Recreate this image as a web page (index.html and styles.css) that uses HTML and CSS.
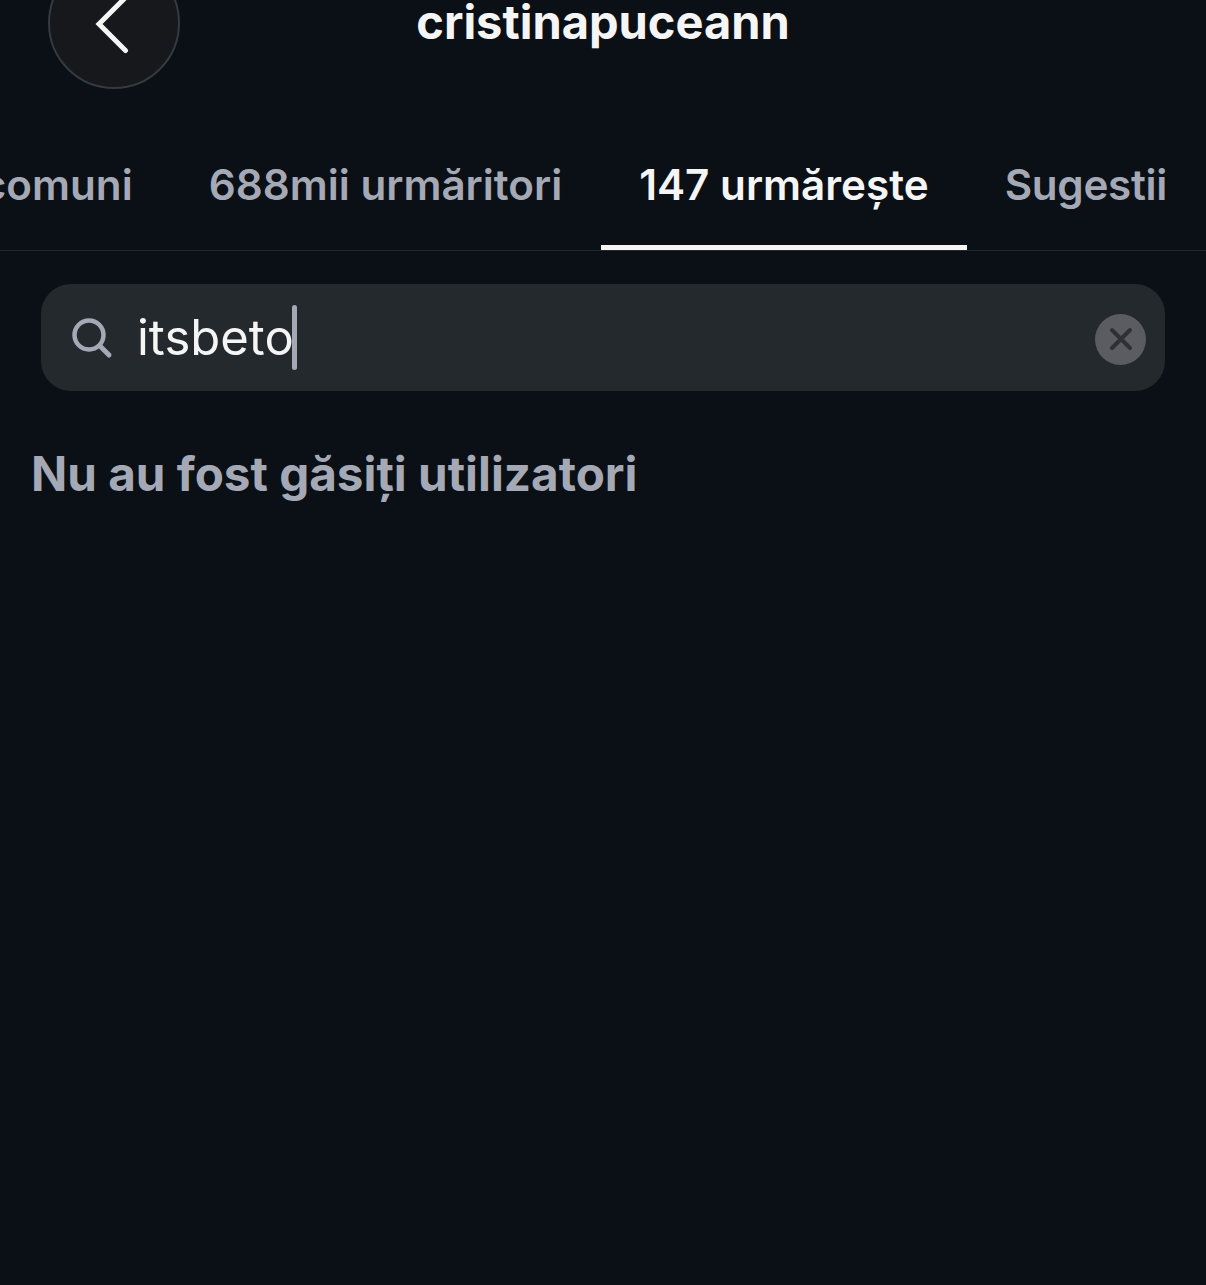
FILE: index.html
```html
<!DOCTYPE html>
<html lang="ro">
<head>
<meta charset="utf-8">
<title>cristinapuceann</title>
<link rel="stylesheet" href="styles.css">
</head>
<body>
<div class="page">
  <header class="header">
    <button class="back" aria-label="Înapoi">
      <svg class="back-icon" viewBox="0 0 40 70" width="40" height="70"><path d="M35 6 L5 36 L31.500 62.500" fill="none" stroke="#f5f5f5" stroke-width="5" stroke-linecap="round" stroke-linejoin="miter"/></svg>
    </button>
    <h1 class="title">cristinapuceann</h1>
  </header>
  <nav class="tabs">
    <div class="tab">20 comuni</div>
    <div class="tab">688mii urmăritori</div>
    <div class="tab tab-active">147 urmărește</div>
    <div class="tab tab-last">Sugestii</div>
  </nav>
  <div class="search">
    <svg class="search-icon" viewBox="0 0 42 42" width="42" height="42"><circle cx="18" cy="18" r="14.500" fill="none" stroke="#a5a8b5" stroke-width="4.500"/><path d="M29 29 L38 38" stroke="#a5a8b5" stroke-width="5" stroke-linecap="round"/></svg>
    <div class="query"><span>itsbeto</span><i class="caret"></i></div>
    <div class="clear">
      <svg viewBox="0 0 24 24" width="24" height="24"><path d="M3 3 L21 21 M21 3 L3 21" stroke="#2e3035" stroke-width="4" stroke-linecap="round"/></svg>
    </div>
  </div>
  <p class="empty">Nu au fost găsiți utilizatori</p>
</div>
</body>
</html>
```

FILE: styles.css
```css
* { box-sizing: border-box; }
html, body { margin: 0; height: 100%; background: #0a1015; overflow: hidden; }
.page { font-family: Inter, "Liberation Sans", sans-serif; color: #f5f5f5; height: 1285px; overflow: hidden; }
.header { position: relative; display: flex; align-items: center; height: 132px; margin-top: -43px; padding-left: 48px; }
.back { width: 132px; height: 132px; flex: none; display: flex; align-items: center; justify-content: center; padding: 0; border-radius: 50%; background: #16181c; border: 2px solid #343a40; }
.back-icon { display: block; }
.title { position: absolute; left: 0; right: 0; top: 0; bottom: 0; margin: 0; padding-bottom: 3px; display: flex; align-items: center; justify-content: center; font-size: 47px; font-weight: 700; color: #f5f5f5; }
.tabs { display: flex; justify-content: flex-end; height: 132px; margin-top: 30px; padding-right: 1px; border-bottom: 1px solid #24282d; overflow: hidden; }
.tab { flex: none; height: 131px; display: flex; align-items: center; padding: 0 38px; font-size: 42.200px; font-weight: 600; color: #a5a8b5; white-space: nowrap; }
.tab-active { color: #f5f5f5; position: relative; margin-left: 1px; }
.tab-active::after { content: ""; position: absolute; left: 0; right: 0; bottom: 0; height: 5px; background: #f5f5f5; }
.tab-last { letter-spacing: -0.3px; }
.search { display: flex; align-items: center; height: 107px; margin: 33px 41px 0; padding: 0 19px 0 30px; background: #24292e; border-radius: 30px; }
.search-icon { flex: none; }
.query { flex: 1; display: flex; align-items: center; margin-left: 24px; font-size: 49px; font-weight: 400; color: #f5f5f5; }
.caret { display: block; width: 5px; height: 65px; margin-left: -2px; border-radius: 3px; background: #a5a8b5; }
.clear { flex: none; width: 51px; height: 51px; margin-top: 3px; border-radius: 50%; background: #5a5c61; display: flex; align-items: center; justify-content: center; }
.empty { margin: 54px 0 0 31px; font-size: 47.600px; font-weight: 700; line-height: 58px; color: #a5a8b5; }
```
